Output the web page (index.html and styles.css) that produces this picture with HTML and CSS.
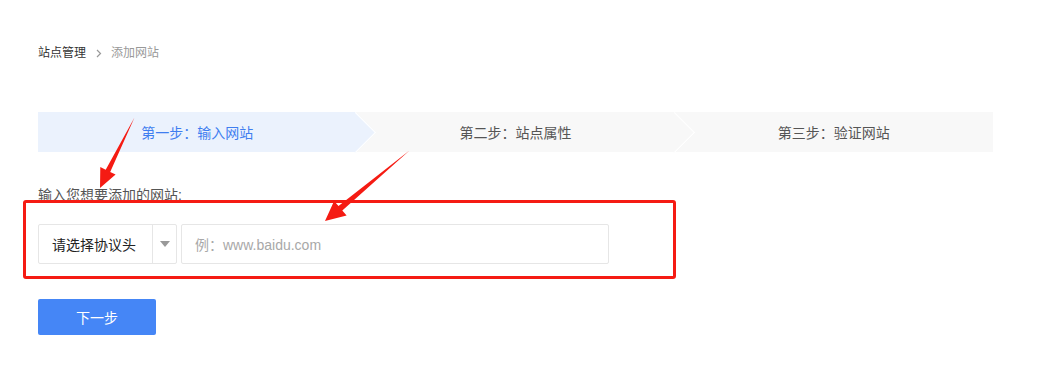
FILE: index.html
```html
<!DOCTYPE html>
<html lang="zh-CN">
<head>
<meta charset="utf-8">
<title>添加网站</title>
<link rel="stylesheet" href="styles.css">
</head>
<body>
<div class="page">
  <div class="breadcrumb">
    <span class="crumb">站点管理</span>
    <svg class="sep" width="6" height="9" viewBox="0 0 6 9"><polyline points="1,1 4.5,4.5 1,8" fill="none" stroke="#999" stroke-width="1.2"/></svg>
    <span class="crumb current">添加网站</span>
  </div>

  <div class="steps">
    <div class="step active">第一步：输入网站</div>
    <div class="step">第二步：站点属性</div>
    <div class="step last">第三步：验证网站</div>
  </div>

  <div class="label">输入您想要添加的网站:</div>

  <div class="form-row">
    <div class="select">
      <span class="select-text">请选择协议头</span>
      <span class="select-arrow"><span class="tri"></span></span>
    </div>
    <div class="input"><span class="placeholder">例：www.baidu.com</span></div>
  </div>

  <button class="btn">下一步</button>

  <div class="highlight"></div>
  <svg class="annot" width="1051" height="372" viewBox="0 0 1051 372">
    <polygon fill="#f51b13" points="134.5,117.5 110.2,171.9 115.6,174.6 100,188 100.3,167.1 105.7,169.7"/>
    <polygon fill="#f51b13" points="409.5,150.5 342.3,210.5 346.6,215.6 325,221 334.1,201.0 338.5,205.9"/>
  </svg>
</div>
</body>
</html>
```

FILE: styles.css
```css
* { box-sizing: border-box; }
html, body { margin: 0; padding: 0; background: #fff; }
body {
  font-family: "Liberation Sans", "Noto Sans CJK SC", sans-serif;
  color: #333;
}
.page {
  position: relative;
  width: 1051px;
  height: 372px;
  padding: 43px 58px 0 38px;
}
.breadcrumb {
  display: flex;
  align-items: center;
  height: 20px;
  font-size: 12px;
  line-height: 20px;
}
.crumb { color: #333; }
.crumb.current { color: #999; }
.sep { margin: 0 9px 0 10px; }

.steps {
  display: flex;
  width: 955px;
  height: 40px;
  margin-top: 49px;
  background: #f8f8f8;
}
.step {
  position: relative;
  flex: 1;
  display: flex;
  align-items: center;
  justify-content: center;
  font-size: 14px;
  color: #555;
  background: #f8f8f8;
}
.step.active {
  background: #ebf2fd;
  color: #3f7ef0;
  z-index: 2;
}
.step::after {
  content: "";
  position: absolute;
  right: -14px;
  top: 6px;
  width: 28px;
  height: 28px;
  background: inherit;
  border-top: 1px solid #fff;
  border-right: 1px solid #fff;
  transform: rotate(45deg);
  z-index: 1;
}
.step.last::after { display: none; }

.label {
  margin-top: 33px;
  height: 20px;
  line-height: 20px;
  font-size: 14px;
  color: #555;
}

.form-row {
  display: flex;
  margin-top: 19px;
  height: 40px;
}
.select {
  display: flex;
  width: 139px;
  height: 40px;
  border: 1px solid #e6e6e6;
  border-radius: 2px;
}
.select-text {
  flex: 1;
  display: flex;
  align-items: center;
  padding-left: 13px;
  font-size: 14px;
  color: #222;
}
.select-arrow {
  width: 24px;
  display: flex;
  align-items: center;
  justify-content: center;
  border-left: 1px solid #e6e6e6;
}
.tri {
  width: 0;
  height: 0;
  border-left: 5px solid transparent;
  border-right: 5px solid transparent;
  border-top: 6px solid #999;
}
.input {
  width: 428px;
  height: 40px;
  margin-left: 4px;
  border: 1px solid #e6e6e6;
  border-radius: 2px;
  display: flex;
  align-items: center;
  padding-left: 13px;
}
.placeholder {
  font-size: 14px;
  color: #a8a8a8;
}

.btn {
  display: block;
  margin-top: 35px;
  width: 118px;
  height: 36px;
  border: 0;
  border-radius: 2px;
  background: #4586f6;
  color: #fff;
  font-family: "Liberation Sans", "Noto Sans CJK SC", sans-serif;
  font-size: 14px;
  padding: 0;
}

.highlight {
  position: absolute;
  left: 23px;
  top: 200px;
  width: 653px;
  height: 79px;
  border: 3px solid #f51b13;
  border-radius: 3px;
  z-index: 9;
}
.annot {
  position: absolute;
  left: 0;
  top: 0;
  z-index: 10;
  pointer-events: none;
}
```
